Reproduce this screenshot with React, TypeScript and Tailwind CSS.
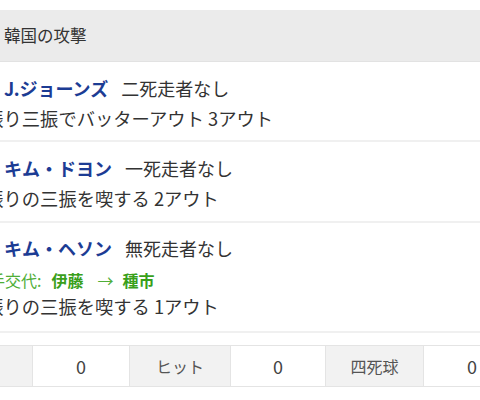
import React from "react";

const font = { fontFamily: '"Noto Sans CJK JP", "Noto Sans", sans-serif' };

function NameLine({ name, situation }: { name: string; situation: string }) {
  return (
    <div className="flex items-center leading-[30px] pl-[4px] whitespace-nowrap">
      <span className="text-[18px] font-bold text-[#1c3c94]">{name}</span>
      <span className="ml-[13px] text-[18px] text-[#333]">{situation}</span>
    </div>
  );
}

function Desc({ text, lh }: { text: string; lh: string }) {
  return (
    <div className={`ml-[-33px] ${lh} text-[18.3px] text-[#333] whitespace-nowrap`}>{text}</div>
  );
}

export default function App() {
  const cells = [
    { t: "得点", label: true, w: "w-[97px]" },
    { t: "0", label: false, w: "w-[97px]" },
    { t: "ヒット", label: true, w: "w-[101px]" },
    { t: "0", label: false, w: "w-[95px]" },
    { t: "四死球", label: true, w: "w-[98px]" },
    { t: "0", label: false, w: "w-[97px]" },
  ];
  return (
    <div className="w-[480px] h-[400px] overflow-hidden bg-white pt-[10px]" style={font}>
      <div className="h-[52px] bg-[#ebebeb] flex items-center pl-[4px] text-[16.5px] text-[#333] border-b border-[#e2e2e2]">
        韓国の攻撃
      </div>

      <div className="border-b-2 border-[#f0f0f0] pt-[11px] pb-[7px]">
        <NameLine name="J.ジョーンズ" situation="二死走者なし" />
        <Desc text="空振り三振でバッターアウト 3アウト" lh="leading-[30px]" />
      </div>

      <div className="border-b-2 border-[#f0f0f0] pt-[11px] pb-[8px]">
        <NameLine name="キム・ドヨン" situation="一死走者なし" />
        <Desc text="空振りの三振を喫する 2アウト" lh="leading-[30px]" />
      </div>

      <div className="border-b-2 border-[#f0f0f0] pt-[10px] pb-[12px]">
        <NameLine name="キム・ヘソン" situation="無死走者なし" />
        <div className="mt-[4px] ml-[-27px] leading-[26px] text-[16px] whitespace-nowrap text-[#4fae38] flex items-center">
          <span>投手交代:</span>
          <span className="ml-[10px] font-bold text-[#39a01b]">伊藤</span>
          <span className="ml-[14px] mr-[9px]">→</span>
          <span className="font-bold text-[#39a01b]">種市</span>
        </div>
        <Desc text="空振りの三振を喫する 1アウト" lh="leading-[26px]" />
      </div>

      <div className="mt-[12px] ml-[-64px] flex h-[42px] border-y border-[#e4e4e4] w-max">
        {cells.map((c, i) => (
          <div
            key={i}
            className={`${c.w} flex items-center justify-center border-r border-[#e4e4e4] ${
              c.label ? "bg-[#f2f2f2] text-[16px] text-[#555]" : "bg-white text-[18px] text-[#444]"
            }`}
          >
            {c.t}
          </div>
        ))}
      </div>
    </div>
  );
}
